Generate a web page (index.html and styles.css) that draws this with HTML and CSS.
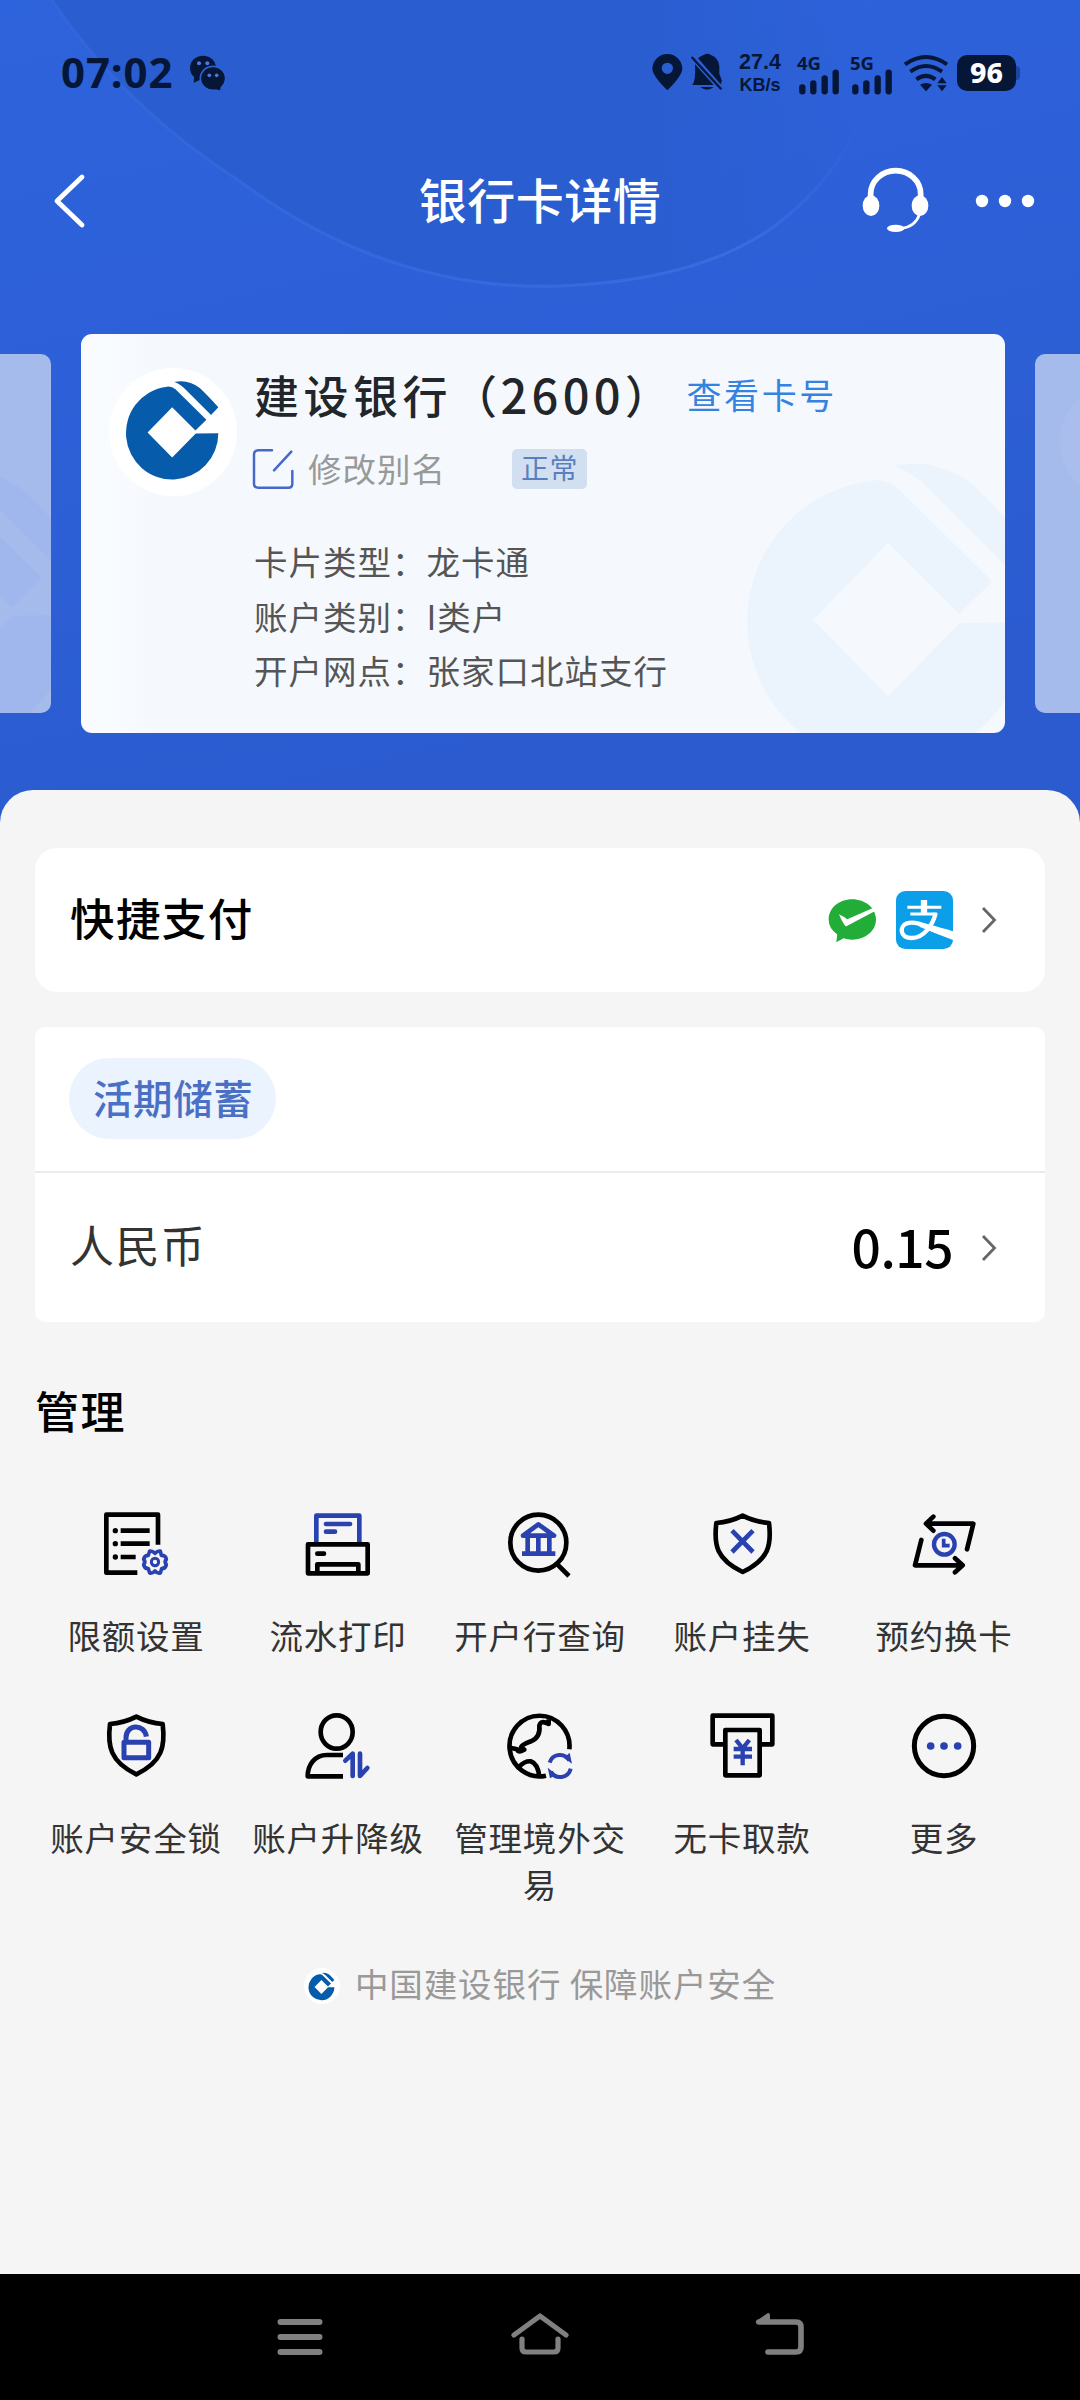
FILE: index.html
```html
<!DOCTYPE html>
<html lang="zh-CN">
<head>
<meta charset="utf-8">
<title>银行卡详情</title>
<link rel="stylesheet" href="styles.css">
</head>
<body>
<svg class="defs" width="0" height="0" aria-hidden="true">
  <symbol id="ccb" viewBox="133 120 290 310">
    <path d="M416 283A139 140 0 1 1 257 144Q274 140 287 151L380 243L347 275L277 205L203 281L277 356L348 284Z"/>
    <path d="M283 129Q325 120 360 147Q378 163 416 205L394 228L318 152Q300 134 283 129Z"/>
  </symbol>
  <symbol id="chev" viewBox="0 0 16 28"><path d="M2 2L13.500 14L2 26" fill="none" stroke="#666" stroke-width="2.800"/></symbol>
</svg>
<div class="page">
  <svg class="backdrop" viewBox="0 0 1080 822" aria-hidden="true">
    <defs>
      <linearGradient id="bg" x1="0" y1="0" x2="0.300" y2="1">
        <stop offset="0" stop-color="#2d63dc"/><stop offset="0.450" stop-color="#2d60d8"/><stop offset="1" stop-color="#2b5bcf"/>
      </linearGradient>
      <linearGradient id="edge" x1="0" y1="0" x2="1" y2="0">
        <stop offset="0" stop-color="#3b6de0" stop-opacity="0.400"/><stop offset="0.850" stop-color="#3b6fe4" stop-opacity="0.800"/><stop offset="1" stop-color="#3b6fe4" stop-opacity="0"/>
      </linearGradient>
      <linearGradient id="disc" x1="0" y1="0" x2="1" y2="0">
        <stop offset="0.700" stop-color="#2a5dcf"/><stop offset="0.980" stop-color="#2a5dcf" stop-opacity="0"/>
      </linearGradient>
    </defs>
    <rect width="1080" height="822" fill="url(#bg)"/>
    <path d="M52 0Q125 108 241 182Q390 292 560 286Q710 280 785 218Q850 165 870 90L880 0Z" fill="url(#disc)"/>
    <path d="M52 0Q125 108 241 182Q390 292 560 286Q710 280 785 218Q850 165 870 90" fill="none" stroke="url(#edge)" stroke-width="3"/>
  </svg>

  <div class="status">
    <span class="clock">07:02</span>
    <svg class="wechat" viewBox="415 25 114 111">
      <g fill="#051637">
        <ellipse cx="460" cy="67" rx="39" ry="37"/><path d="M434 92L432 111L455 101Z"/>
        <ellipse cx="490" cy="98" rx="38" ry="36" stroke="#2c60d6" stroke-width="5"/><path d="M494 130L511 134L514 118Z"/>
      </g>
      <g fill="#4d79dc"><circle cx="448" cy="53" r="6"/><circle cx="473" cy="53" r="6"/><circle cx="479" cy="89" r="5.500"/><circle cx="501" cy="89" r="5.500"/></g>
    </svg>
    <svg class="pinbell" viewBox="62 30 222 144">
      <g fill="#051637">
        <path fill-rule="evenodd" d="M111 45A45 45 0 0 1 156 90Q154 112 111 154Q68 112 66 90A45 45 0 0 1 111 45ZM111 71A17 17 0 1 0 111 105A17 17 0 1 0 111 71Z"/>
        <path d="M203 58Q212 50 220 48Q231 40 242 48Q265 57 267 82V105L275 125L271 136Z"/>
        <path d="M194 76L250 138H186Q197 125 194 76ZM210 144H250Q230 160 210 144Z"/>
      </g>
      <path d="M184 54L273 151" stroke="#051637" stroke-width="7"/>
    </svg>
    <span class="speed"><span class="rate">27.4</span><span class="unit">KB/s</span></span>
    <span class="cell"><span class="net">4G</span>
      <svg viewBox="503 80 132 78"><g stroke="#051637" stroke-width="19" stroke-linecap="round"><path d="M519 135V147M552 123V147M586 108V147M619 91V147"/></g></svg>
    </span>
    <span class="cell"><span class="net">5G</span>
      <svg viewBox="503 80 132 78"><g stroke="#051637" stroke-width="19" stroke-linecap="round"><path d="M519 135V147M552 123V147M586 108V147M619 91V147"/></g></svg>
    </span>
    <svg class="wifi" viewBox="818 30 138 144">
      <g fill="none" stroke="#051637" stroke-width="12"><path d="M824 76Q887 32 950 76"/><path d="M840 98Q887 64 935 98"/><path d="M858 121Q887 100 915 121"/></g>
      <path fill="#051637" d="M869 137Q887 127 905 137L887 157ZM921 133L935 114L949 133ZM921 139L935 157L949 139Z"/>
    </svg>
    <span class="battery">96</span>
  </div>

  <header class="topbar">
    <svg class="back" viewBox="0 0 36 60"><path d="M31 6L6 30L31 54" fill="none" stroke="#fff" stroke-width="4.800" stroke-linecap="round" stroke-linejoin="round"/></svg>
    <h1>银行卡详情</h1>
    <div class="tools">
      <svg class="headset" viewBox="690 375 216 216">
        <g fill="none" stroke="#fff"><path d="M722 475V462A75 70 0 0 1 872 462V475" stroke-width="17"/><path d="M869 522Q856 560 815 565" stroke-width="8"/></g>
        <g fill="#fff"><ellipse cx="723" cy="497" rx="25" ry="31"/><ellipse cx="870" cy="497" rx="25" ry="31"/><ellipse cx="797" cy="565" rx="26" ry="11"/></g>
      </svg>
      <svg class="dots" viewBox="0 0 60 14" fill="#fff"><circle cx="7" cy="7" r="6.200"/><circle cx="30" cy="7" r="6.200"/><circle cx="53" cy="7" r="6.200"/></svg>
    </div>
  </header>

  <section class="carousel">
    <div class="peek left"><svg class="mark"><use href="#ccb"/></svg></div>
    <article class="bankcard">
      <svg class="mark"><use href="#ccb"/></svg>
      <div class="logo"><svg><use href="#ccb"/></svg></div>
      <div class="info">
        <div class="name"><span>建设银行（<b>2600</b>）</span><a>查看卡号</a></div>
        <div class="alias">
          <svg viewBox="517 324 126 126"><g fill="none" stroke="#4669c8" stroke-width="7.500" stroke-linecap="round"><path d="M577 331H536Q523 331 523 344V431Q523 443 536 443H626Q638 443 638 431V393"/><path d="M583 391L635 335"/></g></svg>
          <span>修改别名</span><em>正常</em>
        </div>
        <ul>
          <li>卡片类型：龙卡通</li>
          <li>账户类别：I类户</li>
          <li>开户网点：张家口北站支行</li>
        </ul>
      </div>
    </article>
    <div class="peek right"><i></i></div>
  </section>

  <main class="sheet">
    <section class="panel pay">
      <span class="lead">快捷支付</span>
      <svg class="wxpay" viewBox="84 81 148 136">
        <path fill="#22ac38" d="M157 85C197 85 229 112 229 146S197 207 157 207Q143 207 131 203L109 215L112 191Q86 173 86 146C86 112 117 85 157 85Z"/>
        <path fill="#fff" d="M117 130Q132 137 142 145L225 109V121L138 167Q130 160 117 130Z"/>
      </svg>
      <svg class="alipay" viewBox="288 63 171 174">
        <rect x="288" y="63" width="171" height="174" rx="28" fill="#0a9fe8"/>
        <path fill="none" stroke="#fff" stroke-width="9" d="M322 112H424M331 132H411"/>
        <path fill="none" stroke="#fff" stroke-width="19" d="M372 90V130"/>
        <path fill="none" stroke="#fff" stroke-width="13" d="M407 129C399 164 371 206 333 204C300 202 297 169 321 160C340 154 360 160 390 174"/>
        <path fill="#fff" d="M340 154Q380 160 459 184V210Q405 190 360 171Z"/>
      </svg>
      <svg class="chev"><use href="#chev"/></svg>
    </section>
    <section class="panel saving">
      <div class="kind"><span>活期储蓄</span></div>
      <div class="balance"><span>人民币</span><strong>0.15</strong><svg class="chev"><use href="#chev"/></svg></div>
    </section>

    <h2>管理</h2>
    <div class="grid">
      <div class="item">
        <svg viewBox="208 414 216 216"><g fill="none" stroke="#000" stroke-width="14" stroke-linejoin="round"><path d="M320 608H227V434H382V524M270 482H357M270 521H357M270 561H315"/></g><g fill="#000"><circle cx="254" cy="482" r="8"/><circle cx="254" cy="521" r="8"/><circle cx="254" cy="561" r="8"/></g>
          <g fill="none" stroke="#2a41b0"><path stroke-width="11" stroke-linejoin="round" d="M357 543Q366 542 373 550Q380 542 389 543L392 556Q406 556 407 568Q400 575 407 584Q405 596 393 596L389 609Q380 611 373 603Q366 611 357 609L353 596Q341 596 339 584Q346 575 339 568Q341 556 353 556Z"/><circle cx="373" cy="576" r="11" stroke-width="9"/></g></svg>
        <span>限额设置</span></div>
      <div class="item">
        <svg viewBox="815 414 216 216"><g fill="none" stroke="#2a41b0" stroke-width="14" stroke-linejoin="round" stroke-linecap="round"><path d="M858 516V437H987V516M887 462H959M887 485H914"/></g><g fill="none" stroke="#000" stroke-width="14" stroke-linejoin="round" stroke-linecap="round"><path d="M833 523H1012V610H833ZM861 610V583H984V610M861 551H881"/></g></svg>
        <span>流水打印</span></div>
      <div class="item">
        <svg viewBox="1422 414 216 216"><g fill="none" stroke="#000" stroke-width="14"><ellipse cx="1525" cy="518" rx="84" ry="84"/><path d="M1582 583L1617 618"/></g><g fill="none" stroke="#2a41b0" stroke-width="14" stroke-linejoin="round"><path d="M1479 497L1525 463L1572 497ZM1493 504V550M1525 504V550M1558 504V550M1476 551H1576"/></g></svg>
        <span>开户行查询</span></div>
      <div class="item">
        <svg viewBox="498 414 216 216"><path fill="none" stroke="#000" stroke-width="14" stroke-linejoin="round" d="M608 437Q571 456 529 459C521 525 529 568 608 606C687 568 695 525 687 459Q645 456 608 437Z"/><path fill="none" stroke="#2a41b0" stroke-width="14" d="M576 482L639 546M639 482L576 546"/></svg>
        <span>账户挂失</span></div>
      <div class="item">
        <svg viewBox="1105 414 216 216"><g fill="none" stroke="#000" stroke-width="14" stroke-linejoin="round" stroke-linecap="round"><path d="M1282 538L1301 461H1163M1181 440L1159 461L1181 482M1145 510L1126 586H1264M1246 565L1269 586L1246 607"/></g><g fill="none" stroke="#2a41b0"><circle cx="1214" cy="523" r="31" stroke-width="13"/><path d="M1212 506V527H1230" stroke-width="11"/></g></svg>
        <span>预约换卡</span></div>
      <div class="item">
        <svg viewBox="208 90 216 216"><path fill="none" stroke="#000" stroke-width="14" stroke-linejoin="round" d="M317 110Q280 129 238 132C230 198 238 245 317 283C396 245 404 198 396 132Q354 129 317 110Z"/><g fill="none" stroke="#2a41b0" stroke-width="15" stroke-linejoin="round"><path d="M280 187H354V233H280ZM286 187V173C286 132 342 130 347 170"/></g></svg>
        <span>账户安全锁</span></div>
      <div class="item">
        <svg viewBox="815 90 216 216"><g fill="none" stroke="#000" stroke-width="14" stroke-linejoin="round"><ellipse cx="919" cy="156" rx="48" ry="50"/><path d="M938 225H890C852 225 832 255 832 289H938"/></g><path fill="none" stroke="#2a41b0" stroke-width="14" stroke-linecap="round" stroke-linejoin="round" d="M945 242L967 221V288M989 221V288L1011 264"/></svg>
        <span>账户升降级</span></div>
      <div class="item">
        <svg viewBox="1422 90 216 216"><g fill="none" stroke="#000" stroke-width="14" stroke-linejoin="round"><path d="M1548 287A90 91 0 1 1 1618 208"/><path d="M1556 118V132Q1532 119 1528 137Q1532 170 1505 183Q1475 194 1473 202L1483 209Q1467 220 1461 208L1440 203M1468 259Q1486 242 1502 244Q1523 251 1528 289"/></g><g fill="none" stroke="#2a41b0" stroke-width="12"><path d="M1559 248A32 32 0 0 1 1618 242M1622 266A32 32 0 0 1 1563 275"/></g><path fill="#2a41b0" d="M1602 234L1619 218L1626 251ZM1580 284L1560 295L1553 263Z"/></svg>
        <span>管理境外交易</span></div>
      <div class="item">
        <svg viewBox="498 90 216 216"><g fill="none" stroke="#000" stroke-width="14" stroke-linejoin="round"><path d="M550 193H518V107H697V193H666M556 150H659V286H556Z"/></g><g fill="none" stroke="#2a41b0" stroke-width="13"><path d="M588 180L608 205L628 180M581 207H636M581 230H636M608 200V256"/></g></svg>
        <span>无卡取款</span></div>
      <div class="item">
        <svg viewBox="1105 90 216 216"><circle cx="1213" cy="198" r="89" fill="none" stroke="#000" stroke-width="15"/><g fill="#2a41b0"><circle cx="1173" cy="198" r="11.500"/><circle cx="1213" cy="198" r="11.500"/><circle cx="1254" cy="198" r="11.500"/></g></svg>
        <span>更多</span></div>
    </div>
    <footer><i><svg><use href="#ccb"/></svg></i><span>中国建设银行 保障账户安全</span></footer>
  </main>

  <nav class="sysnav">
    <svg viewBox="0 0 60 48"><path d="M10.500 13H49.500M10.500 28H49.500M10.500 43H49.500" stroke="#808080" stroke-width="6" stroke-linecap="round"/></svg>
    <svg viewBox="0 0 60 48"><path d="M4 26L30 7L56 26M12 30V39Q12 43 16 43H44Q48 43 48 39V30" fill="none" stroke="#808080" stroke-width="5.200" stroke-linecap="round" stroke-linejoin="round"/></svg>
    <svg viewBox="0 0 60 48"><path d="M9 13H46Q51 13 51 18V38Q51 43 46 43H18" fill="none" stroke="#808080" stroke-width="5.600" stroke-linecap="round"/><path d="M6 12L18 4Q20 4 20 7V15H9Q5 15 6 12Z" fill="#808080"/></svg>
  </nav>
</div>
</body>
</html>
```
FILE: styles.css
```css
* { box-sizing: border-box; margin: 0; padding: 0; }
body { background: #f5f5f5; }
svg { display: block; flex: none; }
i, em { font-style: normal; }
.defs { position: absolute; }

.page {
  position: relative;
  display: flex;
  flex-direction: column;
  width: 1080px;
  height: 2400px;
  overflow: hidden;
  font-family: "Noto Sans CJK SC", sans-serif;
}
.backdrop { position: absolute; left: 0; top: 0; width: 1080px; height: 822px; }

/* system status bar */
.status {
  position: relative;
  display: flex;
  align-items: center;
  height: 146px;
  padding: 0 64px 0 61px;
  color: #051637;
  font-family: "Noto Sans", sans-serif;
  font-weight: 700;
}
.clock { width: 127px; margin-top: -2px; font-size: 42px; letter-spacing: 0.900px; line-height: 50px; }
.wechat { width: 38px; height: 37px; margin-top: -2px; }
.pinbell { width: 74px; height: 48px; margin-left: auto; }
.speed { display: flex; flex-direction: column; width: 44px; margin: 0 15px 0 13px; font-family: "Liberation Sans", sans-serif; text-align: center; white-space: nowrap; }
.rate { font-size: 21.500px; line-height: 23px; }
.unit { font-size: 18px; line-height: 22px; }
.cell { width: 44px; height: 44px; margin-right: 9px; }
.net { display: block; height: 18px; font-size: 18.500px; line-height: 24px; }
.cell svg { width: 44px; height: 26px; }
.wifi { width: 46px; height: 48px; margin: 0 8px 0 0; }
.battery {
  position: relative;
  width: 59px;
  height: 36px;
  border-radius: 10px;
  background: #051637;
  color: #fff;
  font-size: 28.500px;
  font-weight: 800;
  line-height: 35px;
  text-align: center;
}
.battery::after {
  content: "";
  position: absolute;
  right: -4px;
  top: 11px;
  width: 4px;
  height: 14px;
  border-radius: 0 4px 4px 0;
  background: #1d459f;
}

/* title bar */
.topbar {
  position: relative;
  display: grid;
  grid-template-columns: 1fr auto 1fr;
  align-items: center;
  height: 110px;
  padding: 0 45px 0 51px;
  color: #fff;
}
.back { width: 36px; height: 60px; }
h1 { margin-top: -6px; padding-right: 6px; font-size: 48px; font-weight: 500; letter-spacing: 0.500px; line-height: 60px; }
.tools { display: flex; align-items: center; justify-content: flex-end; gap: 43px; }
.headset { width: 72px; height: 72px; }
.dots { width: 60px; height: 14px; }

/* card carousel */
.carousel {
  position: relative;
  display: flex;
  align-items: center;
  justify-content: space-between;
  height: 399px;
  margin: 78px 0 57px;
}
.peek { position: relative; height: 359px; background: #a5bbec; overflow: hidden; }
.peek.left { width: 51px; border-radius: 0 10px 10px 0; }
.peek.right { width: 45px; border-radius: 10px 0 0 10px; }
.peek .mark { position: absolute; left: -184px; top: 112px; width: 265px; height: 283px; fill: #9fb7ec; }
.peek i { position: absolute; left: 25px; top: 30px; width: 116px; height: 116px; border-radius: 50%; background: #a9beed; }
.bankcard {
  position: relative;
  display: flex;
  width: 924px;
  height: 399px;
  padding: 34px 0 0 28px;
  border-radius: 11px;
  overflow: hidden;
  background: linear-gradient(90deg, #fafcff 0, #f5f9fe 8%);
}
.bankcard > .mark { position: absolute; left: 661px; top: 123px; width: 294px; height: 314px; fill: #ebf3fd; }
.logo { display: flex; justify-content: center; width: 128px; height: 128px; padding-top: 11px; border-radius: 50%; background: #fff; }
.logo svg { width: 97px; height: 103px; margin-right: 1px; fill: #065bab; }
.info { position: relative; margin-top: -3px; padding-left: 17px; }
.name { display: flex; align-items: center; height: 56px; color: #222529; font-size: 45px; font-weight: 500; letter-spacing: 4.500px; white-space: nowrap; }
.name span { width: 432.500px; }
.name b { margin-left: -1px; font-size: 47px; font-weight: 500; letter-spacing: 4.300px; }
.name a { color: #3583e0; font-size: 35px; font-weight: 400; letter-spacing: 2.600px; }
.alias { display: flex; align-items: center; height: 42px; margin-top: 27px; color: #999; font-size: 33.500px; letter-spacing: 1px; }
.alias svg { width: 42px; height: 42px; margin: 0 14px 0 -2px; }
.alias span { margin-top: -4px; }
.alias em { height: 40px; margin-left: 66px; padding: 0 9px; border-radius: 5px; background: #d2dff1; color: #5a7fbe; font-size: 28px; line-height: 36px; letter-spacing: 0.500px; }
.info ul { margin-top: 44px; list-style: none; color: #555; font-size: 33.500px; letter-spacing: 1px; line-height: 54.500px; }

/* content sheet */
.sheet {
  position: relative;
  flex: 1;
  padding: 58px 35px 0;
  border-radius: 33px 33px 0 0;
  background: #f5f5f5;
}
.panel { background: #fff; }
.chev { width: 16px; height: 28px; }
.pay { display: flex; align-items: center; height: 144px; padding: 0 48px 0 35px; border-radius: 22px; }
.lead { flex: 1; margin-top: -6px; font-size: 44.500px; font-weight: 500; letter-spacing: 1.400px; line-height: 60px; }
.wxpay { width: 49px; height: 45px; margin-right: 19px; }
.alipay { width: 57px; height: 58px; margin-right: 28px; }
.saving { margin-top: 35px; border-radius: 10px; }
.kind { display: flex; height: 146px; padding: 31px 34px 0; border-bottom: 2px solid #ebebeb; }
.kind span { height: 81px; padding: 0 23px 0 24px; border-radius: 41px; background: #eaf3fe; color: #4a70c5; font-size: 39.500px; font-weight: 500; letter-spacing: 0.600px; line-height: 77px; }
.balance { display: flex; align-items: center; height: 149px; padding: 0 48px 0 35px; color: #333; font-size: 44px; }
.balance span { flex: 1; margin-top: -7px; letter-spacing: 1.400px; }
.balance strong { margin: -5px 28px 0 0; color: #000; font-size: 51.500px; font-weight: 500; letter-spacing: -0.500px; }
h2 { margin-top: 58px; font-size: 44px; font-weight: 500; letter-spacing: 1.400px; line-height: 60px; }
.grid { display: grid; grid-template-columns: repeat(5, 202px); margin-top: 68px; }
.item { display: flex; flex-direction: column; align-items: center; min-height: 202px; color: #333; }
.item svg { width: 72px; height: 72px; }
.item span { width: 176px; margin-top: 31px; font-size: 33.500px; letter-spacing: 0.800px; line-height: 47px; text-align: center; }
footer { display: flex; align-items: center; justify-content: center; height: 60px; margin-top: 44px; color: #999; font-size: 33.500px; letter-spacing: 0.900px; }
footer i { display: flex; align-items: center; justify-content: center; width: 36px; height: 36px; margin-right: 15px; border-radius: 50%; background: #fff; }
footer svg { width: 27px; height: 29px; fill: #065bab; }
footer span { margin-top: -8px; }

/* system navigation */
.sysnav { position: relative; display: flex; align-items: flex-start; justify-content: space-between; height: 126px; padding: 35px 270px 0; background: #000; }
.sysnav svg { width: 60px; height: 48px; }
```
